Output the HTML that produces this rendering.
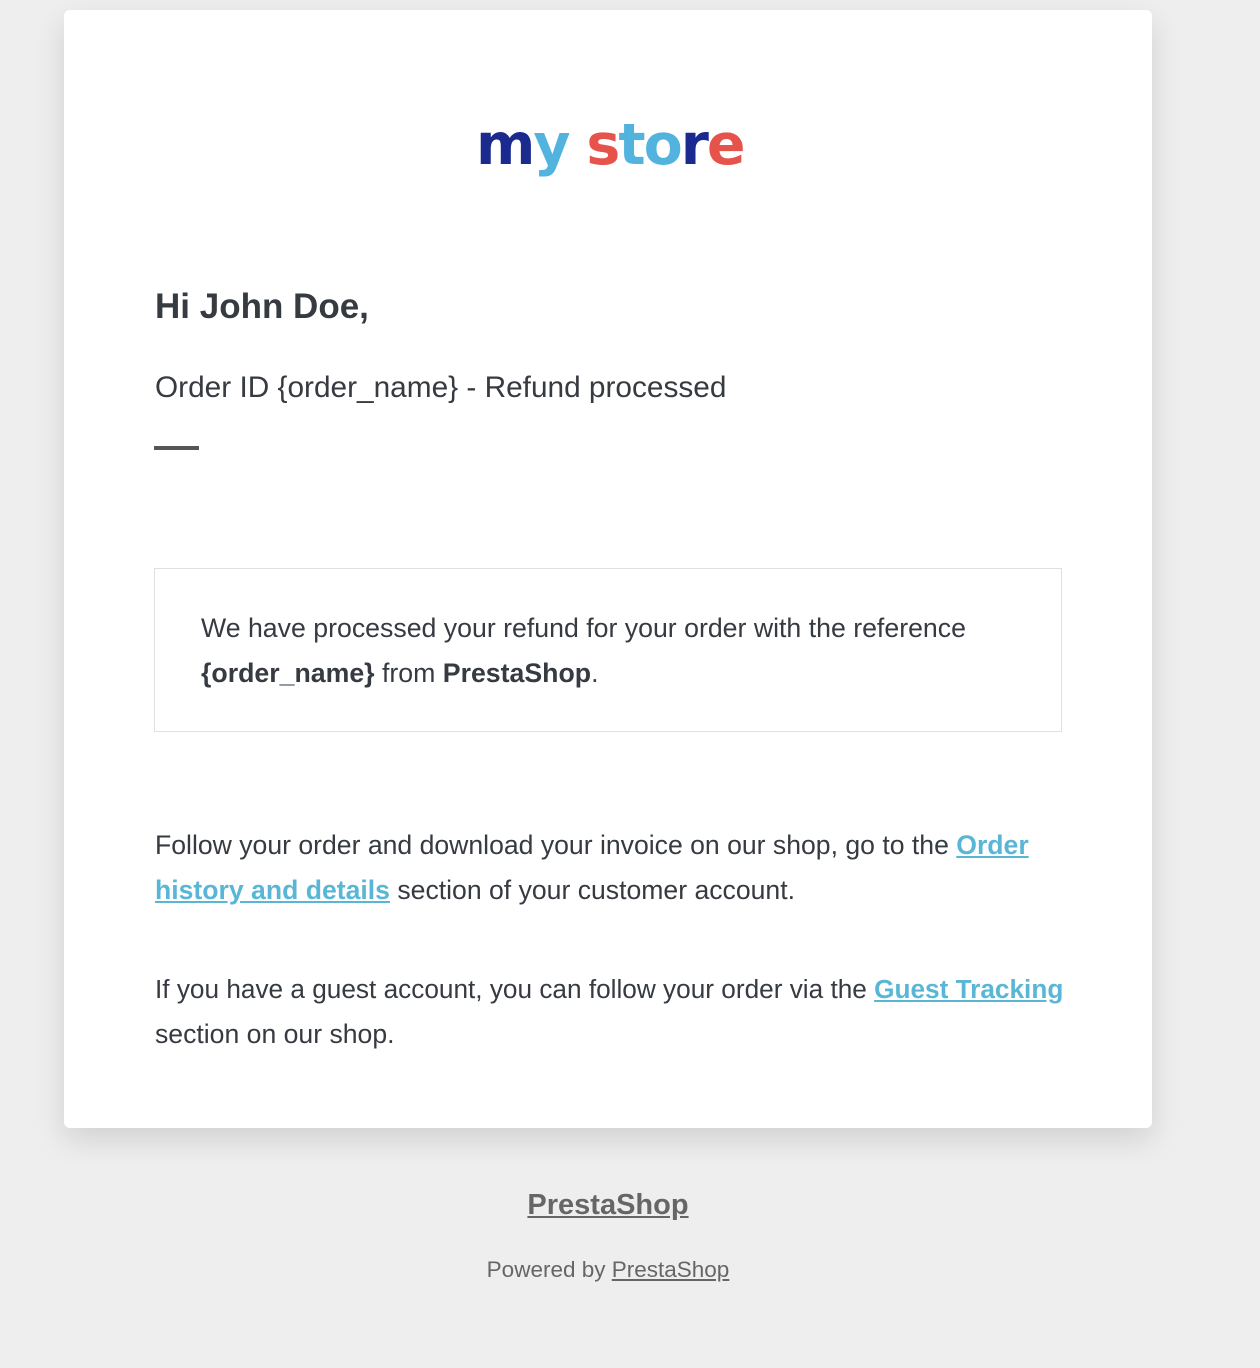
<!DOCTYPE html>
<html><head><meta charset="utf-8"><style>
body{margin:0;width:1260px;height:1368px;background:#eeeeee;font-family:"Liberation Sans",sans-serif;color:#363a41;position:relative;overflow:hidden}
.card{position:absolute;left:64px;top:10px;width:1088px;height:1118px;background:#fff;border-radius:6px;box-shadow:0 12px 30px rgba(0,0,0,0.12)}
.t{position:absolute;white-space:nowrap;line-height:40px}
a{color:#5ab6d6;font-weight:bold;text-decoration:underline}
.logo{position:absolute;left:476px;top:100px;font-family:"DejaVu Sans",sans-serif;font-weight:bold;font-size:57px;letter-spacing:-2px;line-height:90px}
</style></head><body>
<div class="card"></div>
<div class="logo"><span style="color:#1b2a8f">m</span><span style="color:#52b4de">y</span> <span style="color:#e6534a">s</span><span style="color:#52b4de">to</span><span style="color:#1b2a8f">r</span><span style="color:#e6534a">e</span></div>
<div class="t" style="left:155px;top:287px;font-size:35px;font-weight:bold">Hi John Doe,</div>
<div class="t" style="left:155px;top:368px;font-size:29.8px">Order ID {order_name} - Refund processed</div>
<div style="position:absolute;left:154px;top:446px;width:45px;height:4px;background:#555"></div>
<div style="position:absolute;left:154px;top:568px;width:906px;height:162px;border:1px solid #dfdfdf"></div>
<div class="t" style="left:201px;top:608px;font-size:26.7px">We have processed your refund for your order with the reference</div>
<div class="t" style="left:201px;top:653px;font-size:26.7px"><b>{order_name}</b> from <b>PrestaShop</b>.</div>
<div class="t" style="left:155px;top:825px;font-size:26.6px">Follow your order and download your invoice on our shop, go to the <a>Order</a></div>
<div class="t" style="left:155px;top:870px;font-size:26.6px"><a>history and details</a> section of your customer account.</div>
<div class="t" style="left:155px;top:969px;font-size:26.2px">If you have a guest account, you can follow your order via the <a>Guest Tracking</a></div>
<div class="t" style="left:155px;top:1014px;font-size:26.6px">section on our shop.</div>
<div class="t" style="left:0;width:1216px;text-align:center;top:1185px;font-size:29px;font-weight:bold;color:#666;text-decoration:underline">PrestaShop</div>
<div class="t" style="left:0;width:1216px;text-align:center;top:1250px;font-size:22.5px;color:#666">Powered by <span style="text-decoration:underline">PrestaShop</span></div>
</body></html>
